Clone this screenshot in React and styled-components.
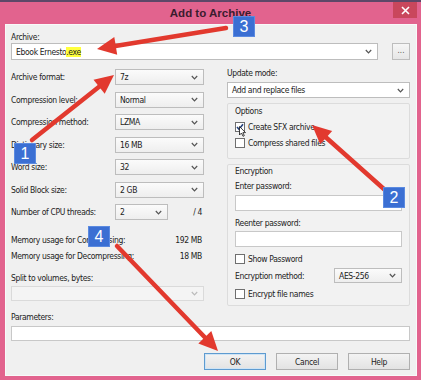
import React from 'react';
import styled, { createGlobalStyle } from 'styled-components';

const FONT = `"Liberation Sans Narrow", "DejaVu Sans Condensed", "Liberation Sans", Arial, sans-serif`;

const GlobalStyle = createGlobalStyle`
  html, body { margin: 0; padding: 0; background: #e2638e; }
  body { font-family: ${FONT}; font-size: 8.5px; letter-spacing: -0.35px; color: #222; }
  * { box-sizing: border-box; }
`;

const Window = styled.div`
  position: relative;
  width: 421px;
  height: 380px;
  background: #e2638e;
  display: flex;
  flex-direction: column;
  overflow: hidden;
`;

const TopEdge = styled.div`
  height: 2px;
  background: #5e4768;
`;

const TitleBar = styled.div`
  height: 22px;
  display: grid;
  grid-template-columns: 1fr auto 1fr;
  align-items: start;
`;

const Title = styled.div`
  grid-column: 2;
  font-family: "Liberation Sans", Arial, sans-serif;
  font-weight: bold;
  font-size: 11.5px;
  letter-spacing: 0;
  line-height: 22px;
  color: #3b1c2e;
`;

const CloseButton = styled.div`
  grid-column: 3;
  justify-self: end;
  width: 24px;
  height: 16px;
  margin-right: 4px;
  background: #c9475c;
  display: flex;
  align-items: center;
  justify-content: center;
`;

const Client = styled.div`
  flex: 1;
  margin: 0 4px 4px 5px;
  background: #f0f0f0;
  border: 1px solid #f9f9f9;
  padding: 6px 6px 0 5px;
  display: flex;
  flex-direction: column;
`;

const Label = styled.div`
  line-height: 12px;
  white-space: nowrap;
  margin-top: ${p => p.$mt || 0}px;
`;

const ArchiveRow = styled.div`
  display: flex;
  align-items: center;
  gap: 14px;
`;

const Select = styled.div`
  display: flex;
  align-items: center;
  justify-content: space-between;
  flex: ${p => (p.$grow ? 1 : 'none')};
  width: ${p => (p.$w ? `${p.$w}px` : 'auto')};
  height: ${p => p.$h || 16}px;
  margin-top: ${p => p.$mt || 0}px;
  padding: 0 5px 0 4px;
  white-space: nowrap;
  background: ${p =>
    p.$disabled ? '#f4f4f4' : p.$editable ? '#ffffff' : 'linear-gradient(#fbfbfb, #eeeeee)'};
  border: 1px solid ${p => (p.$disabled ? '#dadada' : '#bdbdbd')};
  color: #222;
`;

const Highlight = styled.span`
  background: #ffff3c;
`;

const BrowseButton = styled.div`
  width: 18px;
  height: 17px;
  border: 1px solid #bdbdbd;
  background: linear-gradient(#f6f6f6, #e6e6e6);
  font-size: 8px;
  letter-spacing: 0;
  color: #555;
  display: flex;
  align-items: center;
  justify-content: center;
  padding-bottom: 3px;
`;

const Columns = styled.div`
  display: grid;
  grid-template-columns: 194px 1fr;
  column-gap: 22px;
  margin-top: 6px;
  align-items: start;
`;

const Column = styled.div`
  display: flex;
  flex-direction: column;
  padding-top: ${p => p.$pt || 0}px;
`;

const FieldGrid = styled.div`
  display: grid;
  grid-template-columns: 104px 89px;
  grid-auto-rows: 22.5px;
  align-items: center;
`;

const SplitCell = styled.div`
  display: flex;
  align-items: center;
  justify-content: space-between;
  padding-right: 2px;
`;

const InfoRow = styled.div`
  display: flex;
  align-items: center;
  justify-content: space-between;
  height: 16px;
  width: 193px;
  padding-right: 2px;
  margin-top: ${p => p.$mt || 0}px;
  white-space: nowrap;
`;

const GroupBox = styled.div`
  margin-top: 5px;
  border: 1px solid #dcdcdc;
  border-radius: 2px;
  background: #f2f2f2;
  padding: 0 7px ${p => p.$pb || 0}px;
  display: flex;
  flex-direction: column;
`;

const CheckList = styled.div`
  display: flex;
  flex-direction: column;
  margin-top: ${p => p.$mt || 0}px;
`;

const CheckRow = styled.div`
  display: flex;
  align-items: center;
  gap: 3px;
  height: 16px;
  margin-top: ${p => p.$mt || 0}px;
  white-space: nowrap;
`;

const Box = styled.div`
  position: relative;
  width: 10px;
  height: 10px;
  border: 1px solid #6f6f6f;
  background: #fff;
  flex: none;
`;

const Cursor = styled.svg`
  position: absolute;
  left: 3px;
  top: 3px;
  overflow: visible;
`;

const TextInput = styled.div`
  height: ${p => p.$h || 16}px;
  margin-top: ${p => p.$mt || 0}px;
  background: #fff;
  border: 1px solid #c8c8c8;
`;

const MethodRow = styled.div`
  display: flex;
  align-items: center;
  justify-content: space-between;
  margin-top: 1px;
  white-space: nowrap;
`;

const ButtonRow = styled.div`
  display: flex;
  justify-content: flex-end;
  gap: 10px;
  margin-top: 12px;
`;

const Button = styled.div`
  width: 62px;
  height: 17px;
  display: flex;
  align-items: center;
  justify-content: center;
  background: linear-gradient(#f3f3f3, #e3e3e3);
  border: 1px solid ${p => (p.$default ? '#5e9bd0' : '#b0b0b0')};
  box-shadow: ${p => (p.$default ? 'inset 0 0 0 1px #cfe4f5' : 'none')};
  color: #222;
`;

const Overlay = styled.svg`
  position: absolute;
  left: 0;
  top: 0;
  pointer-events: none;
`;

const Badge = styled.div`
  position: absolute;
  left: ${p => p.$x}px;
  top: ${p => p.$y}px;
  width: 22px;
  height: 21px;
  background: #3b6fd3;
  border: 1px solid #5b8ae0;
  color: #fff;
  font-family: "Liberation Sans", Arial, sans-serif;
  font-size: 16px;
  letter-spacing: 0;
  display: flex;
  align-items: center;
  justify-content: center;
`;

const Chevron = ({ light }) => (
  <svg width="7" height="5" viewBox="0 0 7 5">
    <path d="M0.8 1 L3.5 3.8 L6.2 1" fill="none" stroke={light ? '#bbb' : '#555'} strokeWidth="1.2" />
  </svg>
);

const Combo = ({ children, ...rest }) => (
  <Select {...rest}>
    <span>{children}</span>
    <Chevron light={rest.$disabled} />
  </Select>
);

const Check = ({ checked, cursor, children, mt }) => (
  <CheckRow $mt={mt}>
    <Box>
      {checked && (
        <svg width="8" height="8" viewBox="0 0 8 8" style={{ display: 'block' }}>
          <path d="M1 4 L3 6.3 L7 1.3" fill="none" stroke="#23407a" strokeWidth="1.6" />
        </svg>
      )}
      {cursor && (
        <Cursor width="7" height="11" viewBox="0 0 7 11">
          <path d="M0.5 0.5 L0.5 9 L2.5 7 L4 10.3 L5.3 9.7 L3.9 6.6 L6.5 6.6 Z" fill="#fff" stroke="#111" strokeWidth="0.8" />
        </Cursor>
      )}
    </Box>
    <span>{children}</span>
  </CheckRow>
);

const ARROWS = [
  { x1: 226, y1: 28, x2: 97, y2: 49 },
  { x1: 32, y1: 140, x2: 114, y2: 75 },
  { x1: 385, y1: 190, x2: 312, y2: 125 },
  { x1: 117, y1: 246, x2: 218, y2: 351 },
];

const BADGES = [
  { n: '3', x: 233, y: 16 },
  { n: '1', x: 14, y: 143 },
  { n: '2', x: 383, y: 187 },
  { n: '4', x: 88, y: 226 },
];

const Arrow = ({ x1, y1, x2, y2 }) => {
  const dx = x2 - x1;
  const dy = y2 - y1;
  const len = Math.hypot(dx, dy);
  const ux = dx / len;
  const uy = dy / len;
  const hl = 19;
  const hw = 9;
  const bx = x2 - ux * hl;
  const by = y2 - uy * hl;
  const px = -uy;
  const py = ux;
  const pts = `${x2},${y2} ${bx + px * hw},${by + py * hw} ${bx - px * hw},${by - py * hw}`;
  return (
    <g>
      <line x1={x1} y1={y1} x2={bx + ux * 2} y2={by + uy * 2} stroke="#e2392e" strokeWidth="4.5" strokeLinecap="round" />
      <polygon points={pts} fill="#e2392e" />
    </g>
  );
};

const LEFT_FIELDS = [
  ['Archive format:', '7z'],
  ['Compression level:', 'Normal'],
  ['Compression method:', 'LZMA'],
  ['Dictionary size:', '16 MB'],
  ['Word size:', '32'],
  ['Solid Block size:', '2 GB'],
];

export default function App() {
  return (
    <>
      <GlobalStyle />
      <Window>
        <TopEdge />
        <TitleBar>
          <Title>Add to Archive</Title>
          <CloseButton>
            <svg width="9" height="9" viewBox="0 0 9 9">
              <path d="M1 1 L8 8 M8 1 L1 8" stroke="#fff" strokeWidth="1.6" />
            </svg>
          </CloseButton>
        </TitleBar>
        <Client>
          <Label>Archive:</Label>
          <ArchiveRow>
            <Combo $grow $h={17} $editable>
              Ebook Ernesto<Highlight>.exe</Highlight>
            </Combo>
            <BrowseButton>...</BrowseButton>
          </ArchiveRow>

          <Columns>
            <Column>
              <FieldGrid>
                {LEFT_FIELDS.map(([l, v]) => (
                  <React.Fragment key={l}>
                    <Label>{l}</Label>
                    <Combo $w={89}>{v}</Combo>
                  </React.Fragment>
                ))}
                <Label>Number of CPU threads:</Label>
                <SplitCell>
                  <Combo $w={53}>2</Combo>
                  <span>/ 4</span>
                </SplitCell>
              </FieldGrid>
              <InfoRow $mt={8.5}>
                <span>Memory usage for Compressing:</span>
                <span>192 MB</span>
              </InfoRow>
              <InfoRow>
                <span>Memory usage for Decompressing:</span>
                <span>18 MB</span>
              </InfoRow>
              <Label $mt={8}>Split to volumes, bytes:</Label>
              <Combo $w={193} $h={15} $mt={2} $disabled />
            </Column>

            <Column $pt={1}>
              <Label>Update mode:</Label>
              <Combo $mt={3} $editable>Add and replace files</Combo>
              <GroupBox $pb={7}>
                <Label $mt={1}>Options</Label>
                <CheckList $mt={2}>
                  <Check checked cursor>Create SFX archive</Check>
                  <Check>Compress shared files</Check>
                </CheckList>
              </GroupBox>
              <GroupBox $pb={3}>
                <Label>Encryption</Label>
                <Label $mt={3}>Enter password:</Label>
                <TextInput $mt={3} />
                <Label $mt={6}>Reenter password:</Label>
                <TextInput $mt={2} />
                <Check mt={4}>Show Password</Check>
                <MethodRow>
                  <span>Encryption method:</span>
                  <Combo $w={68} $h={15}>AES-256</Combo>
                </MethodRow>
                <Check mt={3}>Encrypt file names</Check>
              </GroupBox>
            </Column>
          </Columns>

          <Label $mt={5}>Parameters:</Label>
          <TextInput $mt={3} $h={15} />
          <ButtonRow>
            <Button $default>OK</Button>
            <Button>Cancel</Button>
            <Button>Help</Button>
          </ButtonRow>
        </Client>

        <Overlay width="421" height="380" viewBox="0 0 421 380">
          {ARROWS.map((a, i) => (
            <Arrow key={i} {...a} />
          ))}
        </Overlay>
        {BADGES.map(b => (
          <Badge key={b.n} $x={b.x} $y={b.y}>
            {b.n}
          </Badge>
        ))}
      </Window>
    </>
  );
}
